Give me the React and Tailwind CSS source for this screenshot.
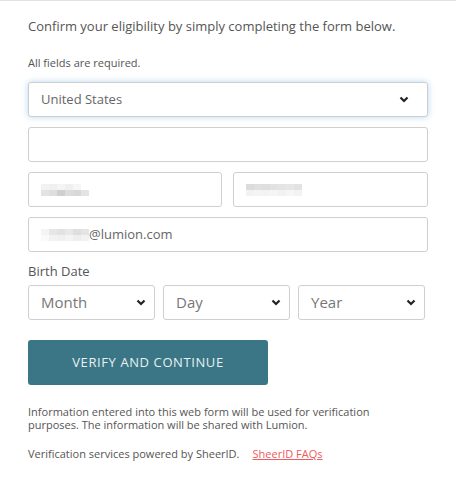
import { useState } from "react";

const Chevron = () => (
  <svg width="10" height="7" viewBox="0 0 10 7" className="shrink-0">
    <path d="M1.5 1.5 L5 5 L8.5 1.5" fill="none" stroke="#222" strokeWidth="2.2" />
  </svg>
);

const Blur = ({ cells }) => (
  <div className="flex flex-col">
    {cells.map((row, i) => (
      <div key={i} className="flex">
        {row.map((c, j) => (
          <div key={j} className="w-[8px] h-[6px]" style={{ background: c }} />
        ))}
      </div>
    ))}
  </div>
);

const Field = ({ children, className = "" }) => (
  <div
    className={`h-[35px] border border-[#cfcfcf] rounded-[3px] bg-white flex items-center px-[12px] ${className}`}
  >
    {children}
  </div>
);

const DateSelect = ({ label }) => (
  <div className="w-[127px] h-[35px] border border-[#cfcfcf] rounded-[3px] bg-white flex items-center justify-between pl-[12px] pr-[8px]">
    <span className="text-[15px] text-[#777]">{label}</span>
    <Chevron />
  </div>
);

const App = () => {
  const [country] = useState("United States");

  return (
    <div className="w-[456px] h-[492px] bg-white border-t border-[#e2e2e2] font-['Open_Sans',sans-serif] text-[#555]">
      <div className="px-[28px]">
        <p className="mt-[16px] text-[13px] leading-[18px]">
          Confirm your eligibility by simply completing the form below.
        </p>
        <p className="mt-[20px] text-[11px] leading-[16px]">All fields are required.</p>

        <div className="mt-[11px] flex flex-col gap-[10px]">
          <div className="h-[35px] border border-[#cfcfcf] rounded-[3px] bg-white flex items-center justify-between pl-[12px] pr-[18px] shadow-[0_0_6px_rgba(120,180,230,0.55)]">
            <span className="text-[13px] text-[#666]">{country}</span>
            <Chevron />
          </div>
          <Field />
          <div className="flex gap-[11px]">
            <Field className="w-[194px]">
              <Blur
                cells={[
                  ["#f2f2f2", "#f0f0f0", "#f4f4f4", "#efefef", "#f6f6f6", "#fff"],
                  ["#e3e3e3", "#dedede", "#cfcfcf", "#dcdcdc", "#d8d8d8", "#e4e4e4"],
                ]}
              />
            </Field>
            <Field className="w-[195px]">
              <Blur
                cells={[
                  ["#dcdcdc", "#e0e0e0", "#dedede", "#e2e2e2", "#e4e4e4", "#e6e6e6", "#e2e2e2"],
                  ["#f2f2f2", "#f4f4f4", "#f3f3f3", "#f5f5f5", "#f2f2f2", "#f6f6f6", "#f3f3f3"],
                ]}
              />
            </Field>
          </div>
          <Field>
            <Blur
              cells={[
                ["#f4f4f4", "#e6e6e6", "#e2e2e2", "#e8e8e8", "#dedede", "#e4e4e4"],
                ["#fafafa", "#f2f2f2", "#f0f0f0", "#f4f4f4", "#eeeeee", "#f2f2f2"],
              ]}
            />
            <span className="text-[13px] text-[#666]">@lumion.com</span>
          </Field>
        </div>

        <p className="mt-[10px] text-[13px] leading-[18px]">Birth Date</p>
        <div className="mt-[5px] flex gap-[8px]">
          <DateSelect label="Month" />
          <DateSelect label="Day" />
          <DateSelect label="Year" />
        </div>

        <button className="mt-[20px] w-[240px] h-[45px] bg-[#3b7686] rounded-[3px] text-[#e8f0f2] text-[13px] tracking-[0.6px] uppercase">
          Verify and continue
        </button>

        <p className="mt-[20px] text-[11px] leading-[13px] pr-[50px]">
          Information entered into this web form will be used for verification purposes. The
          information will be shared with Lumion.
        </p>
        <p className="mt-[16px] text-[11px] leading-[13px]">
          Verification services powered by SheerID.
          <a className="ml-[13px] text-[#f05a5a] underline">SheerID FAQs</a>
        </p>
      </div>
    </div>
  );
};

export default App;
